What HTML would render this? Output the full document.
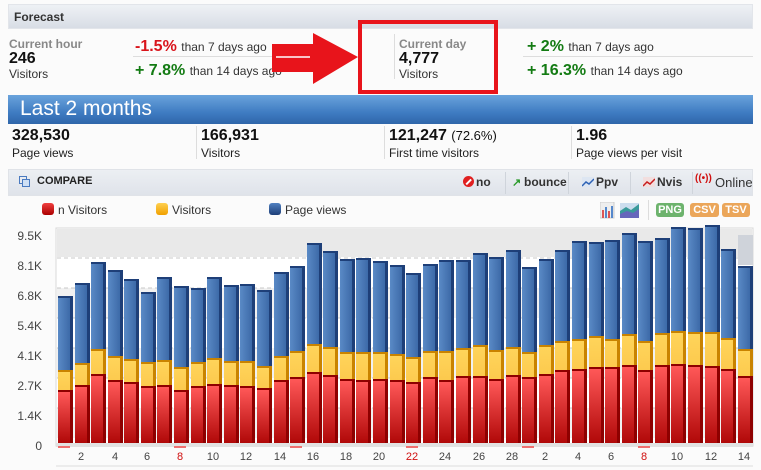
<!DOCTYPE html>
<html><head><meta charset="utf-8"><style>
*{margin:0;padding:0;box-sizing:border-box}
body{width:761px;height:470px;background:#fbfbfb;font-family:"Liberation Sans",sans-serif;position:relative;overflow:hidden;color:#222}
.a{position:absolute;white-space:nowrap}
.hdr{left:8px;top:4px;width:745px;height:25px;background:linear-gradient(#eef1f5,#d8dde5);border:1px solid #e2e5ea}
.b{font-weight:bold}
.sm{font-size:12px;color:#333}
.g{color:#888;font-weight:bold;font-size:12px}
.big{font-size:16px;font-weight:bold;color:#111}
.red{color:#d9141b;font-weight:bold;font-size:16px}
.grn{color:#137b13;font-weight:bold;font-size:16px}
.st{font-size:16px;font-weight:bold;color:#111}
.stl{font-size:12px;color:#222}
.vs{position:absolute;width:1px;background:#ddd}
.tb{font-size:12px;color:#333;font-weight:bold}
svg rect.bd{fill:#1e3f78}svg rect.bf{fill:url(#gb)}
svg rect.yd{fill:#c98300}svg rect.yf{fill:url(#gy)}
svg rect.rd{fill:#8e0000}svg rect.rf{fill:url(#gr)}
</style></head><body>
<div class="a hdr"></div>
<div class="a b" style="left:14px;top:10px;font-size:12px;color:#333">Forecast</div>

<div class="a g" style="left:9px;top:37px">Current hour</div>
<div class="a big" style="left:9px;top:50px">246</div>
<div class="a sm" style="left:9px;top:67px">Visitors</div>

<div class="a" style="left:135px;top:38px"><span class="red">-1.5%</span> <span class="sm">than 7 days ago</span></div>
<div class="a" style="left:133px;top:56px;width:140px;height:1px;background:#ddd"></div>
<div class="a" style="left:135px;top:62px"><span class="grn">+ 7.8%</span> <span class="sm">than 14 days ago</span></div>

<svg class="a" style="left:270px;top:30px" width="92" height="58"><polygon points="2,14 43,14 43,3 88,27 43,54 43,42 2,42" fill="#e8141b"/><line x1="6" y1="27" x2="40" y2="27" stroke="#fff" stroke-width="1.5"/></svg>

<div class="a" style="left:358px;top:20px;width:140px;height:74px;border:4px solid #e8141b"></div>
<div class="vs" style="left:394px;top:34px;height:45px"></div>
<div class="a g" style="left:399px;top:37px">Current day</div>
<div class="a big" style="left:399px;top:50px">4,777</div>
<div class="a sm" style="left:399px;top:67px">Visitors</div>

<div class="a" style="left:527px;top:38px"><span class="grn">+ 2%</span> <span class="sm">than 7 days ago</span></div>
<div class="a" style="left:523px;top:56px;width:230px;height:1px;background:#ddd"></div>
<div class="a" style="left:527px;top:62px"><span class="grn">+ 16.3%</span> <span class="sm">than 14 days ago</span></div>

<div class="a" style="left:8px;top:95px;width:745px;height:29px;background:linear-gradient(#6aa3dc,#3f7cc2 60%,#2f66aa)"></div>
<div class="a" style="left:20px;top:97px;font-size:21px;color:#fff">Last 2 months</div>

<div class="a st" style="left:12px;top:127px">328,530</div><div class="a stl" style="left:12px;top:146px">Page views</div>
<div class="vs" style="left:196px;top:126px;height:33px"></div>
<div class="a st" style="left:201px;top:127px">166,931</div><div class="a stl" style="left:201px;top:146px">Visitors</div>
<div class="vs" style="left:384px;top:126px;height:33px"></div>
<div class="a st" style="left:389px;top:127px">121,247 <span style="font-weight:normal;font-size:13px">(72.6%)</span></div><div class="a stl" style="left:389px;top:146px">First time visitors</div>
<div class="vs" style="left:571px;top:126px;height:33px"></div>
<div class="a st" style="left:576px;top:127px">1.96</div><div class="a stl" style="left:576px;top:146px">Page views per visit</div>

<div class="a" style="left:8px;top:169px;width:745px;height:27px;background:linear-gradient(#eceff3,#dfe3ea);border:1px solid #e0e3e8"></div>
<div class="a" style="left:19px;top:176px;width:8px;height:8px;border:1px solid #4a7ac0"></div>
<div class="a" style="left:22px;top:179px;width:8px;height:8px;border:1px solid #4a7ac0;background:#cfe0f5"></div>
<div class="a tb" style="left:37px;top:175px;font-size:11px;color:#222">COMPARE</div>
<div class="a" style="left:463px;top:176px;width:11px;height:11px;border-radius:50%;background:#e02020"></div>
<div class="a" style="left:465px;top:181px;width:7px;height:1.5px;background:#fff;transform:rotate(-45deg)"></div>
<div class="a tb" style="left:476px;top:175px">no</div>
<div class="vs" style="left:505px;top:172px;height:22px;background:#cfd4db"></div>
<div class="a" style="left:512px;top:176px;color:#2a9a2a;font-size:11px;font-weight:bold">&#8599;</div>
<div class="a tb" style="left:524px;top:175px">bounce</div>
<div class="vs" style="left:568px;top:172px;height:22px;background:#cfd4db"></div>
<svg class="a" style="left:582px;top:177px" width="12" height="10"><rect width="12" height="10" fill="#dde6f2"/><polyline points="0,9 4,5 7,7 12,2" stroke="#2e62b5" fill="none" stroke-width="1.5"/></svg>
<div class="a tb" style="left:596px;top:175px">Ppv</div>
<div class="vs" style="left:630px;top:172px;height:22px;background:#cfd4db"></div>
<svg class="a" style="left:643px;top:177px" width="12" height="10"><rect width="12" height="10" fill="#f2dede"/><polyline points="0,9 4,5 7,7 12,2" stroke="#c81e1e" fill="none" stroke-width="1.5"/></svg>
<div class="a tb" style="left:657px;top:175px">Nvis</div>
<div class="vs" style="left:692px;top:172px;height:22px;background:#cfd4db"></div>
<div class="a" style="left:695px;top:173px;color:#d01010;font-size:10px;font-weight:bold">((•))</div>
<div class="a tb" style="left:715px;top:175px;font-weight:normal;font-size:13px">Online</div>

<div class="a" style="left:42px;top:203px;width:12px;height:12px;border-radius:3px;background:linear-gradient(#f04040,#a00)"></div>
<div class="a sm" style="left:58px;top:203px">n Visitors</div>
<div class="a" style="left:156px;top:203px;width:12px;height:12px;border-radius:3px;background:linear-gradient(#ffd050,#f0a000)"></div>
<div class="a sm" style="left:172px;top:203px">Visitors</div>
<div class="a" style="left:269px;top:203px;width:12px;height:12px;border-radius:3px;background:linear-gradient(#5080c0,#1e3f78)"></div>
<div class="a sm" style="left:285px;top:203px">Page views</div>

<svg class="a" style="left:600px;top:202px" width="40" height="17"><rect x="0" y="0" width="14" height="16" fill="#eee" stroke="#ccc"/><rect x="2" y="8" width="2" height="8" fill="#d55"/><rect x="5" y="5" width="2" height="11" fill="#58c"/><rect x="8" y="9" width="2" height="7" fill="#d55"/><rect x="11" y="4" width="2" height="12" fill="#58c"/><rect x="20" y="1" width="19" height="15" fill="#cde"/><polygon points="20,16 20,9 26,5 31,8 39,2 39,16" fill="#3a9a9a"/><polygon points="20,16 20,12 27,9 33,11 39,7 39,16" fill="#66b"/></svg>
<div class="vs" style="left:648px;top:200px;height:20px"></div>
<div class="a" style="left:656px;top:203px;width:28px;height:14px;border-radius:3px;background:#6db36d;color:#fff;font-size:11px;font-weight:bold;text-align:center;line-height:14px">PNG</div>
<div class="a" style="left:690px;top:203px;width:29px;height:14px;border-radius:3px;background:#eba65a;color:#fff;font-size:11px;font-weight:bold;text-align:center;line-height:14px">CSV</div>
<div class="a" style="left:722px;top:203px;width:28px;height:14px;border-radius:3px;background:#eba65a;color:#fff;font-size:11px;font-weight:bold;text-align:center;line-height:14px">TSV</div>

<svg class="a" style="left:0;top:0" width="761" height="470">
<defs>
<linearGradient id="gb" x1="0" x2="1"><stop offset="0" stop-color="#5a8ac6"/><stop offset="1" stop-color="#3d6aa8"/></linearGradient>
<linearGradient id="gy" x1="0" x2="0" y1="0" y2="1"><stop offset="0" stop-color="#ffd45a"/><stop offset="1" stop-color="#f6b030"/></linearGradient>
<linearGradient id="gr" x1="0" x2="0" y1="0" y2="1"><stop offset="0" stop-color="#ff5858"/><stop offset="1" stop-color="#b00808"/></linearGradient>
</defs>
<rect x="56" y="228" width="697" height="218" fill="#fff" stroke="#d8d8d8"/>
<rect x="57" y="229" width="695" height="28" fill="#e9e9e9"/>
<rect x="57" y="288" width="695" height="30" fill="#f1f1f1"/>
<rect x="57" y="348" width="695" height="30" fill="#f1f1f1"/>
<rect x="57" y="408" width="695" height="30" fill="#f1f1f1"/>
<g stroke="#c8c8c8" stroke-dasharray="4,3"><line x1="57" y1="258" x2="752" y2="258"/><line x1="57" y1="288" x2="752" y2="288"/><line x1="57" y1="318" x2="752" y2="318"/><line x1="57" y1="348" x2="752" y2="348"/><line x1="57" y1="378" x2="752" y2="378"/><line x1="57" y1="408" x2="752" y2="408"/></g>
<rect x="738" y="235" width="15" height="30" fill="#cfd3da"/>
<g font-family="Liberation Sans, sans-serif" font-size="12" fill="#444" text-anchor="end">
<text x="42" y="240">9.5K</text><text x="42" y="270">8.1K</text><text x="42" y="300">6.8K</text><text x="42" y="330">5.4K</text><text x="42" y="360">4.1K</text><text x="42" y="390">2.7K</text><text x="42" y="420">1.4K</text><text x="42" y="450">0</text>
</g>
<g>
<rect class="bd" x="58" y="296" width="15" height="147"/><rect class="bf" x="58" y="298" width="12" height="145"/><rect class="yd" x="58" y="370" width="15" height="73"/><rect class="yf" x="58" y="372" width="12" height="71"/><rect class="rd" x="58" y="390" width="15" height="53"/><rect class="rf" x="58" y="392" width="12" height="51"/>
<rect class="bd" x="75" y="283" width="15" height="160"/><rect class="bf" x="75" y="285" width="12" height="158"/><rect class="yd" x="75" y="363" width="15" height="80"/><rect class="yf" x="75" y="365" width="12" height="78"/><rect class="rd" x="75" y="385" width="15" height="58"/><rect class="rf" x="75" y="387" width="12" height="56"/>
<rect class="bd" x="91" y="262" width="15" height="181"/><rect class="bf" x="91" y="264" width="12" height="179"/><rect class="yd" x="91" y="349" width="15" height="94"/><rect class="yf" x="91" y="351" width="12" height="92"/><rect class="rd" x="91" y="374" width="15" height="69"/><rect class="rf" x="91" y="376" width="12" height="67"/>
<rect class="bd" x="108" y="270" width="15" height="173"/><rect class="bf" x="108" y="272" width="12" height="171"/><rect class="yd" x="108" y="356" width="15" height="87"/><rect class="yf" x="108" y="358" width="12" height="85"/><rect class="rd" x="108" y="380" width="15" height="63"/><rect class="rf" x="108" y="382" width="12" height="61"/>
<rect class="bd" x="124" y="279" width="15" height="164"/><rect class="bf" x="124" y="281" width="12" height="162"/><rect class="yd" x="124" y="359" width="15" height="84"/><rect class="yf" x="124" y="361" width="12" height="82"/><rect class="rd" x="124" y="382" width="15" height="61"/><rect class="rf" x="124" y="384" width="12" height="59"/>
<rect class="bd" x="141" y="292" width="15" height="151"/><rect class="bf" x="141" y="294" width="12" height="149"/><rect class="yd" x="141" y="362" width="15" height="81"/><rect class="yf" x="141" y="364" width="12" height="79"/><rect class="rd" x="141" y="386" width="15" height="57"/><rect class="rf" x="141" y="388" width="12" height="55"/>
<rect class="bd" x="157" y="277" width="15" height="166"/><rect class="bf" x="157" y="279" width="12" height="164"/><rect class="yd" x="157" y="360" width="15" height="83"/><rect class="yf" x="157" y="362" width="12" height="81"/><rect class="rd" x="157" y="385" width="15" height="58"/><rect class="rf" x="157" y="387" width="12" height="56"/>
<rect class="bd" x="174" y="286" width="15" height="157"/><rect class="bf" x="174" y="288" width="12" height="155"/><rect class="yd" x="174" y="367" width="15" height="76"/><rect class="yf" x="174" y="369" width="12" height="74"/><rect class="rd" x="174" y="390" width="15" height="53"/><rect class="rf" x="174" y="392" width="12" height="51"/>
<rect class="bd" x="191" y="288" width="15" height="155"/><rect class="bf" x="191" y="290" width="12" height="153"/><rect class="yd" x="191" y="362" width="15" height="81"/><rect class="yf" x="191" y="364" width="12" height="79"/><rect class="rd" x="191" y="386" width="15" height="57"/><rect class="rf" x="191" y="388" width="12" height="55"/>
<rect class="bd" x="207" y="277" width="15" height="166"/><rect class="bf" x="207" y="279" width="12" height="164"/><rect class="yd" x="207" y="358" width="15" height="85"/><rect class="yf" x="207" y="360" width="12" height="83"/><rect class="rd" x="207" y="384" width="15" height="59"/><rect class="rf" x="207" y="386" width="12" height="57"/>
<rect class="bd" x="224" y="285" width="15" height="158"/><rect class="bf" x="224" y="287" width="12" height="156"/><rect class="yd" x="224" y="361" width="15" height="82"/><rect class="yf" x="224" y="363" width="12" height="80"/><rect class="rd" x="224" y="385" width="15" height="58"/><rect class="rf" x="224" y="387" width="12" height="56"/>
<rect class="bd" x="240" y="284" width="15" height="159"/><rect class="bf" x="240" y="286" width="12" height="157"/><rect class="yd" x="240" y="361" width="15" height="82"/><rect class="yf" x="240" y="363" width="12" height="80"/><rect class="rd" x="240" y="386" width="15" height="57"/><rect class="rf" x="240" y="388" width="12" height="55"/>
<rect class="bd" x="257" y="290" width="15" height="153"/><rect class="bf" x="257" y="292" width="12" height="151"/><rect class="yd" x="257" y="366" width="15" height="77"/><rect class="yf" x="257" y="368" width="12" height="75"/><rect class="rd" x="257" y="388" width="15" height="55"/><rect class="rf" x="257" y="390" width="12" height="53"/>
<rect class="bd" x="274" y="272" width="15" height="171"/><rect class="bf" x="274" y="274" width="12" height="169"/><rect class="yd" x="274" y="356" width="15" height="87"/><rect class="yf" x="274" y="358" width="12" height="85"/><rect class="rd" x="274" y="380" width="15" height="63"/><rect class="rf" x="274" y="382" width="12" height="61"/>
<rect class="bd" x="290" y="266" width="15" height="177"/><rect class="bf" x="290" y="268" width="12" height="175"/><rect class="yd" x="290" y="351" width="15" height="92"/><rect class="yf" x="290" y="353" width="12" height="90"/><rect class="rd" x="290" y="377" width="15" height="66"/><rect class="rf" x="290" y="379" width="12" height="64"/>
<rect class="bd" x="307" y="243" width="15" height="200"/><rect class="bf" x="307" y="245" width="12" height="198"/><rect class="yd" x="307" y="344" width="15" height="99"/><rect class="yf" x="307" y="346" width="12" height="97"/><rect class="rd" x="307" y="372" width="15" height="71"/><rect class="rf" x="307" y="374" width="12" height="69"/>
<rect class="bd" x="323" y="251" width="15" height="192"/><rect class="bf" x="323" y="253" width="12" height="190"/><rect class="yd" x="323" y="347" width="15" height="96"/><rect class="yf" x="323" y="349" width="12" height="94"/><rect class="rd" x="323" y="375" width="15" height="68"/><rect class="rf" x="323" y="377" width="12" height="66"/>
<rect class="bd" x="340" y="259" width="15" height="184"/><rect class="bf" x="340" y="261" width="12" height="182"/><rect class="yd" x="340" y="352" width="15" height="91"/><rect class="yf" x="340" y="354" width="12" height="89"/><rect class="rd" x="340" y="379" width="15" height="64"/><rect class="rf" x="340" y="381" width="12" height="62"/>
<rect class="bd" x="356" y="258" width="15" height="185"/><rect class="bf" x="356" y="260" width="12" height="183"/><rect class="yd" x="356" y="352" width="15" height="91"/><rect class="yf" x="356" y="354" width="12" height="89"/><rect class="rd" x="356" y="380" width="15" height="63"/><rect class="rf" x="356" y="382" width="12" height="61"/>
<rect class="bd" x="373" y="261" width="15" height="182"/><rect class="bf" x="373" y="263" width="12" height="180"/><rect class="yd" x="373" y="352" width="15" height="91"/><rect class="yf" x="373" y="354" width="12" height="89"/><rect class="rd" x="373" y="379" width="15" height="64"/><rect class="rf" x="373" y="381" width="12" height="62"/>
<rect class="bd" x="390" y="265" width="15" height="178"/><rect class="bf" x="390" y="267" width="12" height="176"/><rect class="yd" x="390" y="354" width="15" height="89"/><rect class="yf" x="390" y="356" width="12" height="87"/><rect class="rd" x="390" y="380" width="15" height="63"/><rect class="rf" x="390" y="382" width="12" height="61"/>
<rect class="bd" x="406" y="273" width="15" height="170"/><rect class="bf" x="406" y="275" width="12" height="168"/><rect class="yd" x="406" y="357" width="15" height="86"/><rect class="yf" x="406" y="359" width="12" height="84"/><rect class="rd" x="406" y="382" width="15" height="61"/><rect class="rf" x="406" y="384" width="12" height="59"/>
<rect class="bd" x="423" y="264" width="15" height="179"/><rect class="bf" x="423" y="266" width="12" height="177"/><rect class="yd" x="423" y="351" width="15" height="92"/><rect class="yf" x="423" y="353" width="12" height="90"/><rect class="rd" x="423" y="377" width="15" height="66"/><rect class="rf" x="423" y="379" width="12" height="64"/>
<rect class="bd" x="439" y="260" width="15" height="183"/><rect class="bf" x="439" y="262" width="12" height="181"/><rect class="yd" x="439" y="351" width="15" height="92"/><rect class="yf" x="439" y="353" width="12" height="90"/><rect class="rd" x="439" y="380" width="15" height="63"/><rect class="rf" x="439" y="382" width="12" height="61"/>
<rect class="bd" x="456" y="260" width="15" height="183"/><rect class="bf" x="456" y="262" width="12" height="181"/><rect class="yd" x="456" y="348" width="15" height="95"/><rect class="yf" x="456" y="350" width="12" height="93"/><rect class="rd" x="456" y="376" width="15" height="67"/><rect class="rf" x="456" y="378" width="12" height="65"/>
<rect class="bd" x="473" y="253" width="15" height="190"/><rect class="bf" x="473" y="255" width="12" height="188"/><rect class="yd" x="473" y="345" width="15" height="98"/><rect class="yf" x="473" y="347" width="12" height="96"/><rect class="rd" x="473" y="376" width="15" height="67"/><rect class="rf" x="473" y="378" width="12" height="65"/>
<rect class="bd" x="489" y="257" width="15" height="186"/><rect class="bf" x="489" y="259" width="12" height="184"/><rect class="yd" x="489" y="350" width="15" height="93"/><rect class="yf" x="489" y="352" width="12" height="91"/><rect class="rd" x="489" y="379" width="15" height="64"/><rect class="rf" x="489" y="381" width="12" height="62"/>
<rect class="bd" x="506" y="250" width="15" height="193"/><rect class="bf" x="506" y="252" width="12" height="191"/><rect class="yd" x="506" y="347" width="15" height="96"/><rect class="yf" x="506" y="349" width="12" height="94"/><rect class="rd" x="506" y="375" width="15" height="68"/><rect class="rf" x="506" y="377" width="12" height="66"/>
<rect class="bd" x="522" y="267" width="15" height="176"/><rect class="bf" x="522" y="269" width="12" height="174"/><rect class="yd" x="522" y="352" width="15" height="91"/><rect class="yf" x="522" y="354" width="12" height="89"/><rect class="rd" x="522" y="377" width="15" height="66"/><rect class="rf" x="522" y="379" width="12" height="64"/>
<rect class="bd" x="539" y="259" width="15" height="184"/><rect class="bf" x="539" y="261" width="12" height="182"/><rect class="yd" x="539" y="345" width="15" height="98"/><rect class="yf" x="539" y="347" width="12" height="96"/><rect class="rd" x="539" y="374" width="15" height="69"/><rect class="rf" x="539" y="376" width="12" height="67"/>
<rect class="bd" x="555" y="250" width="15" height="193"/><rect class="bf" x="555" y="252" width="12" height="191"/><rect class="yd" x="555" y="341" width="15" height="102"/><rect class="yf" x="555" y="343" width="12" height="100"/><rect class="rd" x="555" y="370" width="15" height="73"/><rect class="rf" x="555" y="372" width="12" height="71"/>
<rect class="bd" x="572" y="241" width="15" height="202"/><rect class="bf" x="572" y="243" width="12" height="200"/><rect class="yd" x="572" y="339" width="15" height="104"/><rect class="yf" x="572" y="341" width="12" height="102"/><rect class="rd" x="572" y="369" width="15" height="74"/><rect class="rf" x="572" y="371" width="12" height="72"/>
<rect class="bd" x="589" y="242" width="15" height="201"/><rect class="bf" x="589" y="244" width="12" height="199"/><rect class="yd" x="589" y="336" width="15" height="107"/><rect class="yf" x="589" y="338" width="12" height="105"/><rect class="rd" x="589" y="367" width="15" height="76"/><rect class="rf" x="589" y="369" width="12" height="74"/>
<rect class="bd" x="605" y="240" width="15" height="203"/><rect class="bf" x="605" y="242" width="12" height="201"/><rect class="yd" x="605" y="339" width="15" height="104"/><rect class="yf" x="605" y="341" width="12" height="102"/><rect class="rd" x="605" y="367" width="15" height="76"/><rect class="rf" x="605" y="369" width="12" height="74"/>
<rect class="bd" x="622" y="233" width="15" height="210"/><rect class="bf" x="622" y="235" width="12" height="208"/><rect class="yd" x="622" y="334" width="15" height="109"/><rect class="yf" x="622" y="336" width="12" height="107"/><rect class="rd" x="622" y="365" width="15" height="78"/><rect class="rf" x="622" y="367" width="12" height="76"/>
<rect class="bd" x="638" y="241" width="15" height="202"/><rect class="bf" x="638" y="243" width="12" height="200"/><rect class="yd" x="638" y="341" width="15" height="102"/><rect class="yf" x="638" y="343" width="12" height="100"/><rect class="rd" x="638" y="370" width="15" height="73"/><rect class="rf" x="638" y="372" width="12" height="71"/>
<rect class="bd" x="655" y="238" width="15" height="205"/><rect class="bf" x="655" y="240" width="12" height="203"/><rect class="yd" x="655" y="333" width="15" height="110"/><rect class="yf" x="655" y="335" width="12" height="108"/><rect class="rd" x="655" y="365" width="15" height="78"/><rect class="rf" x="655" y="367" width="12" height="76"/>
<rect class="bd" x="671" y="227" width="15" height="216"/><rect class="bf" x="671" y="229" width="12" height="214"/><rect class="yd" x="671" y="331" width="15" height="112"/><rect class="yf" x="671" y="333" width="12" height="110"/><rect class="rd" x="671" y="364" width="15" height="79"/><rect class="rf" x="671" y="366" width="12" height="77"/>
<rect class="bd" x="688" y="228" width="15" height="215"/><rect class="bf" x="688" y="230" width="12" height="213"/><rect class="yd" x="688" y="332" width="15" height="111"/><rect class="yf" x="688" y="334" width="12" height="109"/><rect class="rd" x="688" y="365" width="15" height="78"/><rect class="rf" x="688" y="367" width="12" height="76"/>
<rect class="bd" x="705" y="225" width="15" height="218"/><rect class="bf" x="705" y="227" width="12" height="216"/><rect class="yd" x="705" y="332" width="15" height="111"/><rect class="yf" x="705" y="334" width="12" height="109"/><rect class="rd" x="705" y="366" width="15" height="77"/><rect class="rf" x="705" y="368" width="12" height="75"/>
<rect class="bd" x="721" y="249" width="15" height="194"/><rect class="bf" x="721" y="251" width="12" height="192"/><rect class="yd" x="721" y="338" width="15" height="105"/><rect class="yf" x="721" y="340" width="12" height="103"/><rect class="rd" x="721" y="369" width="15" height="74"/><rect class="rf" x="721" y="371" width="12" height="72"/>
<rect class="bd" x="738" y="266" width="15" height="177"/><rect class="bf" x="738" y="268" width="12" height="175"/><rect class="yd" x="738" y="349" width="15" height="94"/><rect class="yf" x="738" y="351" width="12" height="92"/><rect class="rd" x="738" y="376" width="15" height="67"/><rect class="rf" x="738" y="378" width="12" height="65"/>
</g>
<rect x="56" y="443" width="697" height="4" fill="#e2e2e2"/>
<g fill="#f07070"><rect x="58" y="446" width="12" height="2"/><rect x="174" y="446" width="12" height="2"/><rect x="290" y="446" width="12" height="2"/><rect x="406" y="446" width="12" height="2"/><rect x="522" y="446" width="12" height="2"/><rect x="638" y="446" width="12" height="2"/></g>
<g font-family="Liberation Sans, sans-serif" font-size="11" fill="#444" text-anchor="middle">
<text x="81" y="460">2</text><text x="115" y="460">4</text><text x="147" y="460">6</text><text x="180" y="460" fill="#d01010">8</text><text x="213" y="460">10</text><text x="246" y="460">12</text><text x="280" y="460">14</text><text x="313" y="460">16</text><text x="346" y="460">18</text><text x="379" y="460">20</text><text x="412" y="460" fill="#d01010">22</text><text x="445" y="460">24</text><text x="479" y="460">26</text><text x="512" y="460">28</text><text x="545" y="460">2</text><text x="578" y="460">4</text><text x="611" y="460">6</text><text x="644" y="460" fill="#d01010">8</text><text x="677" y="460">10</text><text x="711" y="460">12</text><text x="744" y="460">14</text>
</g>
<line x1="56" y1="466" x2="753" y2="466" stroke="#ddd"/>
</svg>
</body></html>
